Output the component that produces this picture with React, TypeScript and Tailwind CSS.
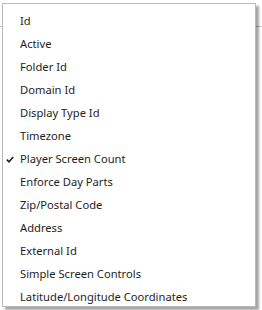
import React from "react";

const columns = [
  { label: "Id", checked: false },
  { label: "Active", checked: false },
  { label: "Folder Id", checked: false },
  { label: "Domain Id", checked: false },
  { label: "Display Type Id", checked: false },
  { label: "Timezone", checked: false },
  { label: "Player Screen Count", checked: true },
  { label: "Enforce Day Parts", checked: false },
  { label: "Zip/Postal Code", checked: false },
  { label: "Address", checked: false },
  { label: "External Id", checked: false },
  { label: "Simple Screen Controls", checked: false },
  { label: "Latitude/Longitude Coordinates", checked: false },
];

function Check() {
  return (
    <svg width="8" height="7" viewBox="0 0 8 7" className="absolute left-[3px] top-[8px]">
      <path d="M0.8 3.6 L3 5.8 L7.2 1" stroke="#1e1e1e" strokeWidth="1.6" fill="none" />
    </svg>
  );
}

export default function App() {
  return (
    <div className="relative w-[262px] h-[310px] bg-white overflow-hidden font-['Segoe_UI','Noto_Sans',sans-serif]">
      {/* page content behind the menu */}
      <div className="h-[27px] border-b border-[#c8c8c8]" />

      <div className="absolute left-[2px] top-[3px] w-[254px] h-[304px] bg-white border border-[#b9b9b9] shadow-[3px_3px_2px_rgba(0,0,0,0.35)] overflow-hidden">
        <ul className="pt-[6px]">
          {columns.map((col) => (
            <li
              key={col.label}
              className="relative h-[23px] pl-[17px] flex items-center text-[11.2px] text-[#1e1e1e] whitespace-nowrap"
            >
              {col.checked && <Check />}
              {col.label}
            </li>
          ))}
        </ul>
      </div>
    </div>
  );
}
